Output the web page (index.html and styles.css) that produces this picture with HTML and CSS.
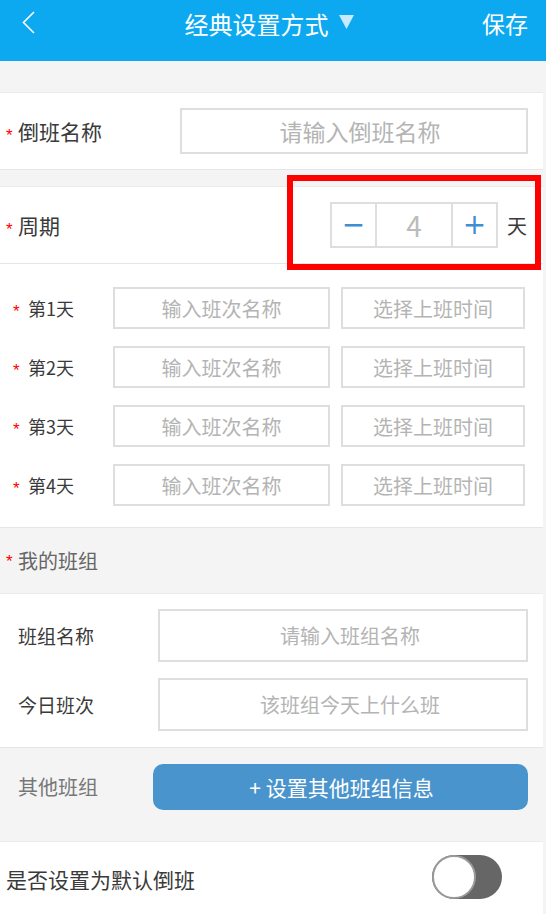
FILE: index.html
```html
<!DOCTYPE html>
<html lang="zh-CN">
<head>
    <meta charset="UTF-8">
    <meta name="viewport" content="width=device-width, initial-scale=1.0">
    <title>经典设置方式</title>
    <link rel="stylesheet" href="styles.css">
</head>
<body>
    <!-- Top bar -->
    <header class="topbar">
        <a class="back" href="#">
            <svg width="14" height="24" viewBox="0 0 14 24"><path d="M12 1 L1.5 11.5 L12 22" fill="none" stroke="#fff" stroke-width="1.6"/></svg>
        </a>
        <div class="title">经典设置方式
            <svg class="caret" width="15" height="15" viewBox="0 0 15 15"><polygon points="0,1 15,1 7.5,15" fill="#c7ebfd"/></svg>
        </div>
        <a class="save" href="#">保存</a>
    </header>

    <div class="page">
        <div class="spacer top"></div>

        <!-- Shift name -->
        <div class="card row name-row">
            <label class="label"><span class="req">*</span>倒班名称</label>
            <input class="field" type="text" placeholder="请输入倒班名称">
        </div>

        <div class="spacer"></div>

        <!-- Cycle length -->
        <div class="card row period-row">
            <label class="label"><span class="req">*</span>周期</label>
            <div class="stepper">
                <button class="step minus">−</button>
                <span class="count">4</span>
                <button class="step plus">+</button>
            </div>
            <span class="unit">天</span>
            <div class="mark"></div>
        </div>

        <!-- Day list -->
        <div class="card days">
            <div class="day">
                <label class="day-label"><span class="req">*</span>第1天</label>
                <input class="field shift" type="text" placeholder="输入班次名称">
                <input class="field time" type="text" placeholder="选择上班时间" readonly>
            </div>
            <div class="day">
                <label class="day-label"><span class="req">*</span>第2天</label>
                <input class="field shift" type="text" placeholder="输入班次名称">
                <input class="field time" type="text" placeholder="选择上班时间" readonly>
            </div>
            <div class="day">
                <label class="day-label"><span class="req">*</span>第3天</label>
                <input class="field shift" type="text" placeholder="输入班次名称">
                <input class="field time" type="text" placeholder="选择上班时间" readonly>
            </div>
            <div class="day">
                <label class="day-label"><span class="req">*</span>第4天</label>
                <input class="field shift" type="text" placeholder="输入班次名称">
                <input class="field time" type="text" placeholder="选择上班时间" readonly>
            </div>
        </div>

        <!-- My team -->
        <div class="group-head"><span class="req">*</span>我的班组</div>
        <div class="card team">
            <div class="team-row">
                <label class="team-label">班组名称</label>
                <input class="field" type="text" placeholder="请输入班组名称">
            </div>
            <div class="team-row">
                <label class="team-label">今日班次</label>
                <input class="field" type="text" placeholder="该班组今天上什么班">
            </div>
        </div>

        <div class="other">
            <span class="other-label">其他班组</span>
            <button class="btn">+ 设置其他班组信息</button>
        </div>

        <div class="card default-row">
            <span class="default-label">是否设置为默认倒班</span>
            <span class="toggle"><span class="knob"></span></span>
        </div>
    </div>
</body>
</html>
```

FILE: styles.css
```css
* {
    box-sizing: border-box;
}

body {
    margin: 0;
    background-color: #f4f4f4;
    font-family: "Noto Sans CJK SC", "Noto Sans", sans-serif;
    color: #3a3a3a;
}

.topbar {
    height: 61px;
    background-color: #0da9f0;
    display: grid;
    grid-template-columns: 1fr auto 1fr;
    align-items: start;
    padding: 0 18px 0 22px;
    color: #fff;
}

.back {
    height: 46px;
    display: flex;
    align-items: center;
}

.title {
    height: 46px;
    display: flex;
    align-items: center;
    font-size: 24px;
    padding-right: 12px;
}

.caret {
    margin-left: 10px;
    margin-top: -4px;
}

.save {
    justify-self: end;
    height: 46px;
    line-height: 46px;
    font-size: 23px;
    color: #fff;
    text-decoration: none;
}

.page {
    position: relative;
    margin-right: 3px;
}

.spacer {
    height: 16px;
}

.spacer.top {
    height: 31px;
}

.card {
    background-color: #fff;
    border-top: 1px solid #ebebeb;
    border-bottom: 1px solid #e6e6e6;
}

.req {
    color: #f00;
    font-family: "Liberation Sans", sans-serif;
    font-size: 17px;
    display: inline-block;
    width: 13px;
    padding-left: 1px;
    position: relative;
    top: 1px;
}

.row {
    height: 78px;
    display: flex;
    align-items: center;
}

.label {
    font-size: 21px;
}

.field {
    border: 2px solid #dedede;
    background: #fff;
    text-align: center;
    font-family: inherit;
    color: #333;
    outline: none;
    padding: 0 6px;
}

.field::placeholder {
    color: #b4b4b4;
}

.name-row {
    padding: 0 15px 0 5px;
}

.name-row .label {
    width: 175px;
}

.name-row .field {
    flex: 1;
    height: 46px;
    font-size: 23px;
    padding-left: 18px;
}

.period-row {
    position: relative;
    padding: 0 16px 0 5px;
}

.period-row .label {
    flex: 1;
}

.stepper {
    display: flex;
    height: 46px;
    border: 2px solid #dedede;
}

.step {
    width: 43px;
    border: none;
    background: #fff;
    color: #3f8ed3;
    font-size: 28px;
    font-family: "DejaVu Sans", sans-serif;
    padding: 0;
    line-height: 40px;
}

.count {
    width: 78px;
    border-left: 2px solid #dedede;
    border-right: 2px solid #dedede;
    text-align: center;
    font-size: 28px;
    line-height: 42px;
    color: #bbb;
}

.unit {
    font-size: 20px;
    margin-left: 9px;
}

/* red highlight frame around the stepper */
.mark {
    position: absolute;
    left: 287px;
    top: -12px;
    width: 254px;
    height: 95px;
    border: 6px solid #f00;
}

.days {
    border-top: none;
    padding: 23px 18px 21px 13px;
    display: flex;
    flex-direction: column;
    gap: 17px;
}

.day {
    display: flex;
    align-items: center;
    height: 42px;
}

.day-label {
    width: 100px;
    font-size: 18px;
}

.day-label .req {
    width: 15px;
    padding-left: 0;
}

.day .field {
    height: 42px;
    font-size: 20px;
}

.shift {
    width: 217px;
    margin-right: 11px;
}

.time {
    flex: 1;
    min-width: 0;
}

.group-head {
    height: 65px;
    display: flex;
    align-items: center;
    padding-left: 5px;
    font-size: 20px;
    color: #666;
}

.team {
    padding: 15px 15px 16px 18px;
    display: flex;
    flex-direction: column;
    gap: 16px;
}

.team-row {
    display: flex;
    align-items: center;
}

.team-label {
    width: 140px;
    font-size: 19px;
}

.team .field {
    flex: 1;
    height: 53px;
    font-size: 20px;
    padding-left: 20px;
}

.other {
    height: 93px;
    display: flex;
    align-items: flex-start;
    padding: 16px 15px 0 18px;
}

.other-label {
    width: 135px;
    line-height: 46px;
    font-size: 20px;
    color: #777;
}

.btn {
    flex: 1;
    height: 46px;
    border: none;
    border-radius: 10px;
    background-color: #4a94cd;
    color: #fff;
    font-family: inherit;
    font-size: 21px;
    padding-left: 8px;
    cursor: pointer;
}

.default-row {
    height: 80px;
    display: flex;
    align-items: flex-start;
    padding: 13px 41px 0 6px;
    border-bottom: none;
}

.default-label {
    flex: 1;
    font-size: 21px;
    line-height: 48px;
}

.toggle {
    width: 70px;
    height: 44px;
    border-radius: 22px;
    background-color: #666;
    position: relative;
    display: block;
}

.knob {
    position: absolute;
    left: 0;
    top: 0;
    width: 44px;
    height: 44px;
    border-radius: 50%;
    background: #fff;
    border: 2px solid #9a9a9a;
}
```
